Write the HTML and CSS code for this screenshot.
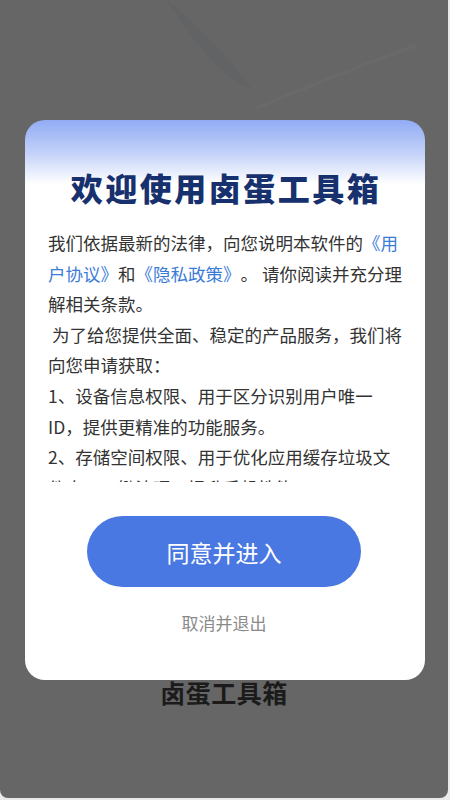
FILE: index.html
```html
<!DOCTYPE html>
<html lang="zh-CN">
<head>
  <meta charset="UTF-8">
  <title>卤蛋工具箱</title>
  <link rel="stylesheet" href="styles.css">
</head>
<body>
  <div class="screen">

    <!-- Dimmed app behind the dialog -->
    <div class="backdrop">
      <svg class="leaf" width="260" height="120" viewBox="0 0 260 120">
        <path d="M5 0 C35 25 70 60 90 90 C60 78 30 40 5 0 Z" fill="#5e5f62" opacity="0.5"/>
        <path d="M95 108 C150 85 200 65 255 45" stroke="#6b6b6b" stroke-width="4" fill="none" opacity="0.5"/>
      </svg>
      <div class="app-name">卤蛋工具箱</div>
    </div>

    <!-- Privacy dialog -->
    <div class="dialog">
      <h1 class="dialog-title">欢迎使用卤蛋工具箱</h1>
      <div class="dialog-body">
        <p>我们依据最新的法律，向您说明本软件的<a href="#">《用户协议》</a>和<a href="#">《隐私政策》</a>。 请你阅读并充分理解相关条款。</p>
        <p>&nbsp;为了给您提供全面、稳定的产品服务，我们将向您申请获取：</p>
        <p>1、设备信息权限、用于区分识别用户唯一ID，提供更精准的功能服务。</p>
        <p>2、存储空间权限、用于优化应用缓存垃圾文件夹，一键清理，提升手机性能。</p>
      </div>
      <div class="dialog-actions">
        <button class="btn-agree">同意并进入</button>
        <button class="btn-cancel">取消并退出</button>
      </div>
    </div>

  </div>
</body>
</html>
```

FILE: styles.css
```css
/* Global */
body {
  margin: 0;
  padding: 0;
  font-family: "Noto Sans CJK SC", "Noto Sans", sans-serif;
  background: #e9e9e9;
  text-spacing-trim: space-all;
}

.screen {
  position: relative;
  width: 450px;
  height: 800px;
  overflow: hidden;
  background: #e9e9e9;
}

/* Backdrop */
.backdrop {
  width: 448px;
  height: 798px;
  background: #666666;
  border-radius: 0 0 8px 8px;
  display: flex;
  flex-direction: column;
  align-items: center;
  padding-top: 674px;
  box-sizing: border-box;
}
.leaf {
  position: absolute;
  left: 162px;
  top: 0;
}
.app-name {
  font-size: 25px;
  font-weight: 700;
  color: #1b1b1b;
  line-height: 36px;
  letter-spacing: 0.5px;
}

/* Dialog */
.dialog {
  position: absolute;
  left: 25px;
  top: 120px;
  width: 400px;
  height: 560px;
  border-radius: 20px;
  background: linear-gradient(180deg, #92abf4 0, #c5d3f9 34px, #ffffff 64px);
  box-sizing: border-box;
  padding: 47px 21px 0 23px;
  display: flex;
  flex-direction: column;
}
.dialog-title {
  margin: 0;
  text-align: center;
  font-size: 32px;
  font-weight: 900;
  line-height: 40px;
  color: #17306e;
  letter-spacing: 2.5px;
}
.dialog-body {
  margin-top: 21px;
  height: 254px;
  overflow: hidden;
  font-size: 17.5px;
  line-height: 30.6px;
  color: #333333;
}
.dialog-body p { margin: 0; }
.dialog-body a {
  color: #3b7bd8;
  text-decoration: none;
}

.dialog-actions {
  margin-top: 34px;
  display: flex;
  flex-direction: column;
  align-items: center;
}
.btn-agree {
  width: 274px;
  height: 71px;
  margin-right: 4px;
  border: none;
  border-radius: 36px;
  background: #4a78e3;
  color: #fff;
  font-family: inherit;
  font-size: 23px;
}
.btn-cancel {
  margin-top: 24px;
  margin-right: 4px;
  border: none;
  background: none;
  color: #8a8a8a;
  font-family: inherit;
  font-size: 17px;
  line-height: 24px;
  padding: 0;
}
```
